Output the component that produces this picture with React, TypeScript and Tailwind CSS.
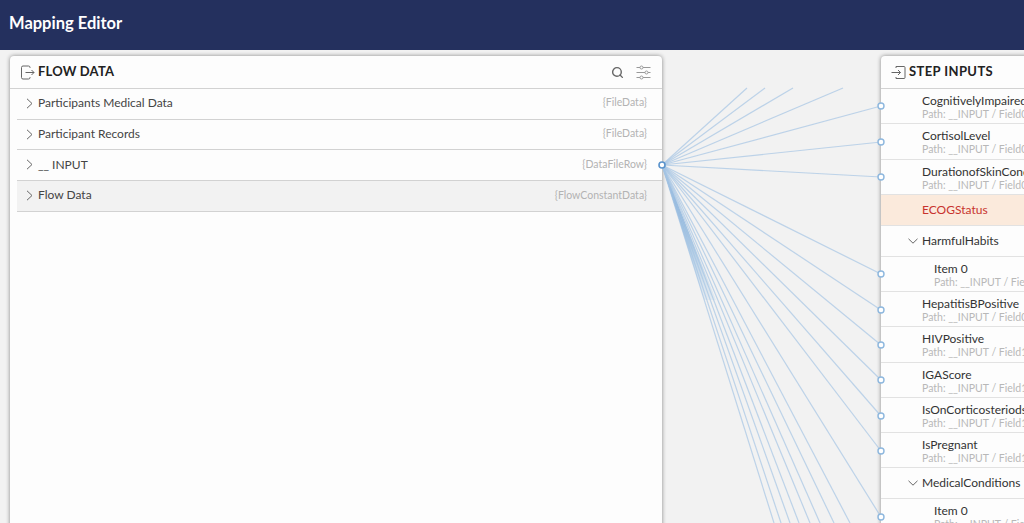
import { Search } from "lucide-react";

const flowRows = [
  { name: "Participants Medical Data", type: "{FileData}" },
  { name: "Participant Records", type: "{FileData}" },
  { name: "__ INPUT", type: "{DataFileRow}" },
  { name: "Flow Data", type: "{FlowConstantData}", active: true },
];

type StepRow = {
  name: string;
  path?: string;
  kind?: "error" | "group" | "child";
};

const stepRows: StepRow[] = [
  { name: "CognitivelyImpaired", path: "Path: __INPUT / Field01" },
  { name: "CortisolLevel", path: "Path: __INPUT / Field02" },
  { name: "DurationofSkinCondition", path: "Path: __INPUT / Field03" },
  { name: "ECOGStatus", kind: "error" },
  { name: "HarmfulHabits", kind: "group" },
  { name: "Item 0", path: "Path: __INPUT / Field04", kind: "child" },
  { name: "HepatitisBPositive", path: "Path: __INPUT / Field09" },
  { name: "HIVPositive", path: "Path: __INPUT / Field10" },
  { name: "IGAScore", path: "Path: __INPUT / Field11" },
  { name: "IsOnCorticosteriods", path: "Path: __INPUT / Field12" },
  { name: "IsPregnant", path: "Path: __INPUT / Field13" },
  { name: "MedicalConditions", kind: "group" },
  { name: "Item 0", path: "Path: __INPUT / Field14", kind: "child" },
];

const origin = { x: 662, y: 165 };
const upperEnds = [747, 765, 793, 843];
const nodeEnds = [106, 142, 177, 274, 310, 345, 380, 416, 451, 517];
const lowerEnds = [774, 781, 790, 799, 810, 820, 834, 850];

function Connectors() {
  return (
    <svg className="pointer-events-none absolute inset-0" width="1024" height="523" fill="none">
      <defs>
        <linearGradient id="fan" x1="0" y1="165" x2="0" y2="300" gradientUnits="userSpaceOnUse">
          <stop offset="0" stopColor="#3f80c4" stopOpacity="1" />
          <stop offset="0.5" stopColor="#7fadd9" stopOpacity="0.7" />
          <stop offset="1" stopColor="#a9cae8" stopOpacity="0.2" />
        </linearGradient>
      </defs>
      <polygon points="662,165 704,300 716,300" fill="url(#fan)" />
      <g stroke="#a5c5e4" strokeWidth="1.200" strokeOpacity="0.7">
        {upperEnds.map((x) => (
          <line key={x} x1={origin.x} y1={origin.y} x2={x} y2="88" />
        ))}
        {nodeEnds.map((y) => (
          <line key={y} x1={origin.x} y1={origin.y} x2="881" y2={y} />
        ))}
        {lowerEnds.map((x) => (
          <line key={x} x1={origin.x} y1={origin.y} x2={x} y2="523" />
        ))}
      </g>
      {nodeEnds.map((y) => (
        <circle key={y} cx="881" cy={y} r="3" fill="#fff" stroke="#8db7de" strokeWidth="1.400" />
      ))}
      <circle cx={origin.x} cy={origin.y} r="3" fill="#fff" stroke="#5a93cc" strokeWidth="1.600" />
    </svg>
  );
}

function OutIcon() {
  return (
    <svg width="15" height="15" viewBox="0 0 15 15" fill="none" stroke="#666" strokeWidth="1">
      <path d="M10 3V2.500A1.500 1.500 0 0 0 8.500 1H3A1.500 1.500 0 0 0 1.500 2.500v10A1.500 1.500 0 0 0 3 14h5.500A1.500 1.500 0 0 0 10 12.500V12" />
      <path d="M5.500 7.500h8.500M11.500 5l2.500 2.500L11.500 10" />
    </svg>
  );
}

function InIcon() {
  return (
    <svg width="15" height="15" viewBox="0 0 15 15" fill="none" stroke="#666" strokeWidth="1">
      <path d="M5 3V1.500h8a1 1 0 0 1 1 1v10a1 1 0 0 1-1 1H5V12" />
      <path d="M.5 7.500h9M7 5l2.500 2.500L7 10" />
    </svg>
  );
}

function SlidersIcon() {
  return (
    <svg className="-translate-x-px" width="15" height="15" viewBox="0 0 15 15" fill="none" stroke="#999" strokeWidth="1">
      <path d="M.5 2.500h3.500M7 2.500h7.500M.5 7.500h8.500M12 7.500h2.500M.5 12.500h3.500M7 12.500h7.500" />
      <circle cx="5.500" cy="2.500" r="1.500" />
      <circle cx="10.500" cy="7.500" r="1.500" />
      <circle cx="5.500" cy="12.500" r="1.500" />
    </svg>
  );
}

function ChevronRightIcon() {
  return (
    <svg className="ml-[9px] mr-[5px] shrink-0" width="7" height="11" viewBox="0 0 7 11" fill="none" stroke="#666" strokeWidth="1">
      <path d="M1 .800 6 5.500 1 10.200" />
    </svg>
  );
}

function ChevronDownIcon() {
  return (
    <svg className="mr-[4px] shrink-0" width="10" height="6" viewBox="0 0 10 6" fill="none" stroke="#666" strokeWidth="1">
      <path d="M.500 .800 5 5.200 9.500 .800" />
    </svg>
  );
}

function FlowRow({ name, type, active }: { name: string; type: string; active?: boolean }) {
  return (
    <div
      className={`flex h-[30.700px] items-center border-b border-[#d2d2d2] pb-[1px] pr-[15px] ${
        active ? "bg-[#f2f2f2]" : ""
      }`}
    >
      <ChevronRightIcon />
      <span className="text-[12px] text-[#444]">{name}</span>
      <span className="ml-auto text-[10.500px] text-[#b3b3b3]">{type}</span>
    </div>
  );
}

function StepItem({ row }: { row: StepRow }) {
  if (row.kind === "error") {
    return (
      <div className="flex h-[31px] items-center border-b border-[#e2e2e2] bg-[#fbeadc] pl-[41px] text-[12px] text-[#c8332e]">
        {row.name}
      </div>
    );
  }
  if (row.kind === "group") {
    return (
      <div className="flex h-[31px] items-center border-b border-[#e2e2e2] pl-[27px] text-[12px] text-[#333]">
        <ChevronDownIcon />
        {row.name}
      </div>
    );
  }
  return (
    <div
      className={`flex h-[35.250px] flex-col justify-center border-b border-[#e2e2e2] pt-[2px] ${
        row.kind === "child" ? "pl-[53px]" : "pl-[41px]"
      }`}
    >
      <span className="text-[12px] leading-[14px] text-[#333]">{row.name}</span>
      <span className="text-[10.500px] leading-[12px] text-[#b8b8b8]">{row.path}</span>
    </div>
  );
}

export default function App() {
  return (
    <div className="relative flex h-[523px] w-[1024px] flex-col overflow-hidden bg-[#f2f2f2] font-['Lato',sans-serif]">
      <header className="flex h-[50px] shrink-0 items-center bg-[#24305e] pb-[4px] pl-[9px] text-[16.500px] font-bold text-white">
        Mapping Editor
      </header>
      <main className="flex min-h-0 flex-1 gap-[219px] pl-[10px] pt-[6px]">
        <section className="h-[500px] w-[652px] shrink-0 rounded-t-[4px] bg-[#fdfdfd] shadow-[0_0_4px_rgba(0,0,0,0.45)]">
          <div className="flex h-[33px] items-center border-b border-[#d2d2d2] pl-[10px] pr-[10px]">
            <OutIcon />
            <span className="ml-[3px] text-[13px] font-bold tracking-[0.2px] text-[#222]">FLOW DATA</span>
            <Search className="ml-auto mr-[13px] size-[13px] text-[#666]" strokeWidth={2.600} />
            <SlidersIcon />
          </div>
          <div className="pl-[7px]">
            {flowRows.map((row) => (
              <FlowRow key={row.name} {...row} />
            ))}
          </div>
        </section>
        <section className="h-[500px] w-[300px] shrink-0 rounded-t-[4px] bg-[#fdfdfd] shadow-[0_0_4px_rgba(0,0,0,0.45)]">
          <div className="flex h-[33px] items-center border-b border-[#d2d2d2] pl-[10px]">
            <InIcon />
            <span className="ml-[3px] text-[13px] font-bold tracking-[0.4px] text-[#222]">STEP INPUTS</span>
          </div>
          {stepRows.map((row, i) => (
            <StepItem key={i} row={row} />
          ))}
        </section>
      </main>
      <Connectors />
    </div>
  );
}
